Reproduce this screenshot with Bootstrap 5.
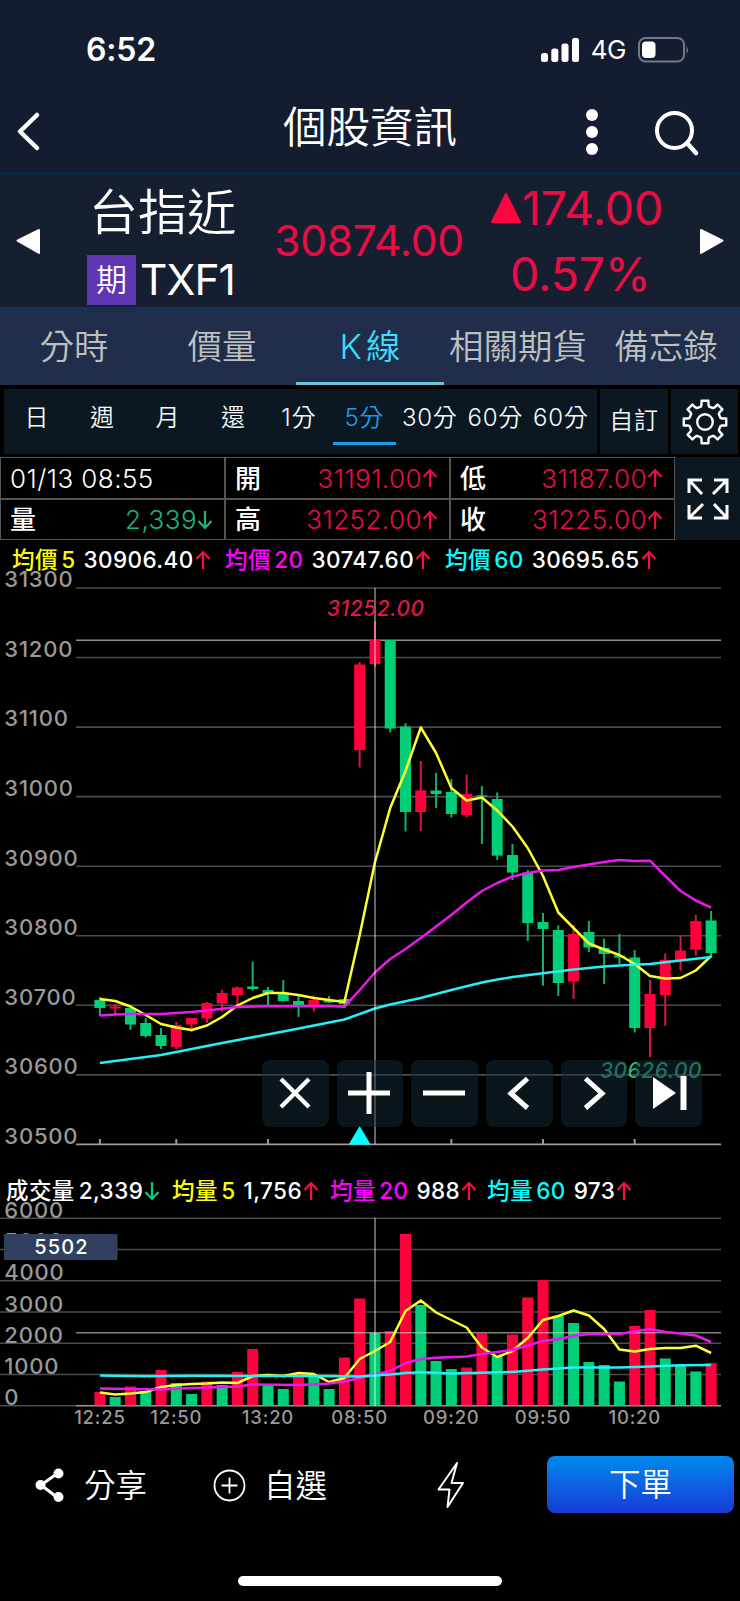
<!DOCTYPE html>
<html lang="zh-Hant">
<head>
<meta charset="utf-8">
<meta name="viewport" content="width=device-width, initial-scale=1">
<title>個股資訊</title>
<link href="https://cdn.jsdelivr.net/npm/bootstrap@5.3.0/dist/css/bootstrap.min.css" rel="stylesheet">
<style>
  body { width: 740px; height: 1601px; background: #000; color: #fff; overflow: hidden;
    font-family: Inter, "Noto Sans CJK TC", sans-serif; line-height: 1; }
  svg { display: block; }
  svg text { font-family: Inter, "Noto Sans CJK TC", sans-serif; }
  .up { color: #ff0a42; } .down { color: #00cf7b; }
  .num-up { color: #ea0d45; } .num-down { color: #17b97b; }

  .app-top { height: 175px; background: #141d30; border-bottom: 3px solid #0a2840; }
  .status-row { height: 98px; padding: 2px 50px 0 86px; }
  .status-row .clock { font-size: 32px; font-weight: 600; letter-spacing: -.2px; }
  .status-row .net { font-size: 26px; letter-spacing: -.5px; }
  .title-row { height: 74px; padding-bottom: 12px; display: grid; grid-template-columns: 1fr 200px 1fr; align-items: center; }
  .title-row h1 { font-size: 43.5px; font-weight: 350; line-height: 58px; margin: 0 0 4px; white-space: nowrap; text-align: center; }

  .quote { height: 132px; background: #161f30; }
  .quote-name { width: 160px; margin-left: 47px; }
  .quote-name .zh { font-size: 49px; font-weight: 350; line-height: 76px; height: 72px; white-space: nowrap; padding-left: 2px; }
  .kind { width: 49px; height: 50px; background: #5f36b3; font-size: 31px; font-weight: 350; line-height: 50px; text-align: center; }
  .code { font-size: 42.5px; font-weight: 400; letter-spacing: -1px; white-space: nowrap; }
  .last-price { width: 190px; margin-left: 27px; font-size: 42.5px; font-weight: 400; text-align: center; letter-spacing: -.3px; white-space: nowrap; }
  .chg { width: 180px; margin-left: 25px; font-size: 46.5px; font-weight: 400; line-height: 66px; letter-spacing: -.1px; }

  .main-tabs { height: 78px; background: linear-gradient(#1a3150, #202e4b 12px, #202e4b); }
  .main-tabs .nav-link { width: 148px; padding: 0; line-height: 79px; height: 78px; font-size: 34.5px; font-weight: 350; white-space: nowrap;
    color: #bec0c0; border-radius: 0; border-bottom: 3px solid transparent; text-align: center; }
  .main-tabs .nav-link.active { color: #3ddcf8; border-color: #6cc6da; }

  .period-bar { height: 72px; padding: 4px 2px 8px 4px; gap: 3px; }
  .pane { background: #0b1821; height: 65px; }
  .period-bar .nav-link { width: 65.5px; padding: 0; height: 65px; font-size: 24px; line-height: 58px; font-weight: 350; color: #f4f8fa; text-align: center; white-space: nowrap; letter-spacing: .7px; }
  .period-bar .nav-link.active { color: #1b9eef; }
  .period-bar .nav-link.active::after { content: ""; display: block; width: 63px; height: 3px; background: #1e9fe6; margin: -5px auto 0; }
  .period-bar .custom { width: 68px; line-height: 64px; }

  .ohlc { width: 675px; height: 83px; display: grid; grid-template-columns: repeat(3, 1fr); grid-template-rows: 1fr 1fr; gap: 2px; background: #555; border: 1px solid #555; }
  .ohlc > div { background: #000; display: flex; justify-content: space-between; align-items: center; padding: 2px 10px 0 9px; font-size: 26px; font-weight: 350; letter-spacing: .45px; }
  .ohlc b { font-weight: 500; font-size: 26px; }
  .ohlc .val { display: flex; align-items: center; }

  .legend-row { font-size: 22.5px; font-weight: 500; white-space: nowrap; letter-spacing: .4px; word-spacing: -3px; }
  .legend-row > span { display: flex; align-items: center; }
  .l5 { color: #ff0; } .l20 { color: #f0f; } .l60 { color: #0ff; }
  .legend-row svg { margin-left: 1px; }

  .tools { left: 262px; top: 484px; gap: 8px; }
  .tools button { width: 66.7px; height: 66.7px; padding: 0; border: 0; border-radius: 8px; background: rgba(22, 42, 56, .5); display: grid; place-items: center; }
  .bottom-row { height: 57px; font-size: 31.5px; font-weight: 350; }
  .bottom-row span { padding-top: 2px; }
  .order-btn { width: 187px; height: 57px; padding: 0; border: 0; border-radius: 8px; color: #fff; font-size: 31.5px; font-weight: 350; background: linear-gradient(#0089ee, #193cd6); }
  .home-bar { width: 264px; height: 10px; border-radius: 5px; background: #fff; }
</style>
</head>
<body>
<svg width="0" height="0" class="position-absolute">
  <defs>
    <g id="arrow-up" fill="none" stroke="currentColor" stroke-width="2.200"><path d="M8 19V2M1.500 9L8 2l6.500 7"/></g>
    <g id="arrow-down" fill="none" stroke="currentColor" stroke-width="2.200"><path d="M8 1v17M1.500 11l6.500 7 6.500-7"/></g>
  </defs>
</svg>

<header class="app-top">
  <div class="status-row d-flex align-items-center">
    <span class="clock">6:52</span>
    <svg class="ms-auto" width="38" height="24" fill="#fff"><rect y="15" width="7" height="9" rx="2.500"/><rect x="10.300" y="10.500" width="7" height="13.500" rx="2.500"/><rect x="20.500" y="5.500" width="7" height="18.500" rx="2.500"/><rect x="31" width="7" height="24" rx="2.500"/></svg>
    <span class="net ms-2 ps-1">4G</span>
    <svg class="ms-2 ps-1" width="56" height="26" viewBox="0 0 52 26"><rect x="1" y="1" width="45" height="23.500" rx="6.500" fill="none" stroke="#717887" stroke-width="2"/><rect x="4" y="4.500" width="13.500" height="16.500" rx="4" fill="#fff"/><path d="M48.500 9q3 4 0 8z" fill="#717887"/></svg>
  </div>
  <div class="title-row">
    <svg width="60" height="60" fill="none" stroke="#fff" stroke-width="4.500" stroke-linecap="round" stroke-linejoin="round"><path d="M37 16L20 32.500 37 49"/></svg>
    <h1>個股資訊</h1>
    <svg width="270" height="60" fill="#fff"><circle cx="122" cy="16" r="6"/><circle cx="122" cy="33" r="6"/><circle cx="122" cy="50" r="6"/><circle cx="204.500" cy="31.500" r="17.500" fill="none" stroke="#fff" stroke-width="4"/><path d="M217 44l9 10" stroke="#fff" stroke-width="4.500" stroke-linecap="round"/></svg>
  </div>
</header>

<section class="quote d-flex align-items-center">
  <svg class="flex-shrink-0" width="40" height="30"><path d="M17.500 14.700L39 4v23z" fill="#fff" stroke="#fff" stroke-width="2" stroke-linejoin="round"/></svg>
  <div class="quote-name align-self-start flex-shrink-0">
    <div class="zh">台指近</div>
    <div class="d-flex align-items-center mt-2"><span class="kind">期</span><span class="code ms-1">TXF1</span></div>
  </div>
  <div class="last-price num-up">30874.00</div>
  <div class="chg num-up">
    <div class="d-flex align-items-center"><svg class="flex-shrink-0" width="33" height="34"><path d="M17 3L31 31H3z" fill="#ff0640" stroke="#ff0640" stroke-width="2" stroke-linejoin="round"/></svg><span>174.00</span></div>
    <div style="padding-left:21px">0.57%</div>
  </div>
  <svg class="ms-auto flex-shrink-0" width="40" height="30"><path d="M22.500 14.700L1 4v23z" fill="#fff" stroke="#fff" stroke-width="2" stroke-linejoin="round"/></svg>
</section>

<nav class="nav main-tabs flex-nowrap">
  <a class="nav-link">分時</a><a class="nav-link">價量</a><a class="nav-link active"><span class="me-1">K</span>線</a><a class="nav-link">相關期貨</a><a class="nav-link">備忘錄</a>
</nav>

<div class="period-bar d-flex">
  <nav class="nav pane flex-nowrap" style="width:593px">
    <a class="nav-link">日</a><a class="nav-link">週</a><a class="nav-link">月</a><a class="nav-link">還</a><a class="nav-link">1分</a><a class="nav-link active">5分</a><a class="nav-link">30分</a><a class="nav-link">60分</a><a class="nav-link">60分</a>
  </nav>
  <div class="pane"><a class="nav-link custom">自訂</a></div>
  <div class="pane d-grid" style="width:67px;place-items:center">
    <svg id="gear" width="46" height="46" viewBox="-23 -23 46 46" fill="none" stroke="#fff" stroke-width="2.400" stroke-linejoin="round"><circle r="7.800"/><path/></svg>
  </div>
</div>

<div class="d-flex">
  <div class="ohlc">
    <div><span>01/13 08:55</span></div>
    <div><b>開</b><span class="val num-up">31191.00<svg width="17" height="21"><use href="#arrow-up"/></svg></span></div>
    <div><b>低</b><span class="val num-up">31187.00<svg width="17" height="21"><use href="#arrow-up"/></svg></span></div>
    <div><b>量</b><span class="val num-down">2,339<svg width="17" height="21"><use href="#arrow-down"/></svg></span></div>
    <div><b>高</b><span class="val num-up">31252.00<svg width="17" height="21"><use href="#arrow-up"/></svg></span></div>
    <div><b>收</b><span class="val num-up">31225.00<svg width="17" height="21"><use href="#arrow-up"/></svg></span></div>
  </div>
  <div class="pane flex-grow-1 d-grid" style="height:83px;place-items:center">
    <svg width="42" height="42" fill="none" stroke="#fff" stroke-width="3"><path d="M2 15V2h13M2 2l13 14M27 2h13v13M40 2L26 16M2 27v13h13M2 40l14-14M27 40h13V27M40 40L27 26"/></svg>
  </div>
</div>

<div class="legend-row d-flex align-items-center" style="height:36px;padding:4px 0 0 12px">
  <span style="width:213px"><span class="l5 me-2">均價 5</span>30906.40<svg class="up" width="16" height="20"><use href="#arrow-up"/></svg></span>
  <span style="width:220px"><span class="l20 me-2">均價 20</span>30747.60<svg class="up" width="16" height="20"><use href="#arrow-up"/></svg></span>
  <span><span class="l60 me-2">均價 60</span>30695.65<svg class="up" width="16" height="20"><use href="#arrow-up"/></svg></span>
</div>

<div class="position-relative">
  <svg id="price" width="740" height="596" viewBox="0 576 740 596" overflow="visible"></svg>
  <div class="tools position-absolute d-flex">
    <button><svg width="34" height="34" stroke="#fff" stroke-width="4.200"><path d="M3 3l28 28M31 3L3 31"/></svg></button>
    <button><svg width="46" height="44" stroke="#fff" stroke-width="5"><path d="M22 1v42M1 22h42"/></svg></button>
    <button><svg width="45" height="44" stroke="#fff" stroke-width="5"><path d="M1 22h42"/></svg></button>
    <button><svg width="34" height="34" fill="none" stroke="#fff" stroke-width="5"><path d="M25.500 2.500L9 17.500l16.500 14.500"/></svg></button>
    <button><svg width="34" height="34" fill="none" stroke="#fff" stroke-width="5"><path d="M8.500 2.500L25 17.500 8.500 32"/></svg></button>
    <button><svg width="36" height="36" fill="#fff"><path d="M2 2l23 16L2 34zM29.500 1h6v34h-6z"/></svg></button>
  </div>
</div>

<div class="legend-row d-flex align-items-center" style="height:36px;padding:2px 0 0 6px">
  <span style="width:166px"><span class="me-1">成交量</span>2,339<svg class="down" width="16" height="20"><use href="#arrow-down"/></svg></span>
  <span style="width:158px"><span class="l5 me-2">均量 5</span>1,756<svg class="up" width="16" height="20"><use href="#arrow-up"/></svg></span>
  <span style="width:157px"><span class="l20 me-2">均量 20</span>988<svg class="up" width="16" height="20"><use href="#arrow-up"/></svg></span>
  <span><span class="l60 me-2">均量 60</span>973<svg class="up" width="16" height="20"><use href="#arrow-up"/></svg></span>
</div>
<svg id="volume" width="740" height="248" viewBox="0 1208 740 248" overflow="visible"></svg>

<footer>
  <div class="bottom-row d-flex align-items-center" style="padding:0 6px 0 34px">
    <svg width="31" height="36" fill="#fff" stroke="#fff" stroke-width="3"><path d="M24 6L7 18l17 13" fill="none"/><circle cx="24.500" cy="6.500" r="3.500"/><circle cx="6.500" cy="18" r="3.500"/><circle cx="24.500" cy="30" r="3.500"/></svg>
    <span style="margin-left:19px">分享</span>
    <svg style="margin-left:65px" width="34" height="34" fill="none" stroke="#fff" stroke-width="1.800"><circle cx="17.500" cy="17.500" r="15"/><path d="M17.500 9.500v16M9.500 17.500h16"/></svg>
    <span style="margin-left:18px">自選</span>
    <svg style="margin-left:109px" width="30" height="50" fill="none" stroke="#fff" stroke-width="2" stroke-linejoin="round"><path d="M21 3L2.500 29.500h11L11.500 47 27 23H15.500z"/></svg>
    <button class="order-btn ms-auto">下單</button>
  </div>
  <div class="home-bar mx-auto" style="margin-top:63px"></div>
</footer>

<script>
const RED = '#ff003c', GREEN = '#00cf78';
const X = i => 99.9 + i * 15.28;
const line = (x1, y1, x2, y2, c, w = 1.5) => `<path d="M${x1} ${y1}L${x2} ${y2}" stroke="${c}" stroke-width="${w}"/>`;
const label = (x, y, s, t, extra = '') => `<text x="${x}" y="${y}" font-size="${s}" font-weight="500" fill="#999" letter-spacing=".8" ${extra}>${t}</text>`;
const poly = (pts, c) => `<polyline fill="none" stroke="${c}" stroke-width="2.500" stroke-linejoin="round" points="${pts.map(([i, y]) => X(i).toFixed(1) + ',' + y).join(' ')}"/>`;
const seq = a => a.map((y, i) => [i, y]);

// direction, body top, body bottom, wick top, wick bottom
const candles = [
  ['g',1000,1008,997,1016],['r',1006.5,1008.5,1004,1014],['g',1008,1024.5,1005,1030],['g',1023,1036,1018,1037.5],['g',1035,1046,1028,1049],
  ['r',1025,1047,1022,1049.500],['r',1018,1024.5,1018,1032],['r',1003,1018.5,1002,1023],['r',993,1003.5,990,1012],['r',987.5,995,986.5,1008],
  ['g',986.5,989,961.5,990.5],['g',990,993,987,1005],['g',993,1001,980,1001.5],['g',1001,1005,995,1017],['r',1000,1006,995.5,1011.5],
  ['g',1000.5,1002.5,996,1003],['g',999,1004,999,1008],['r',664.500,750,662,767.5],['r',640,664,621,666.5],['g',640,728.5,640,732.500],
  ['g',726.5,812,723,831.500],['r',790.3,812,761,831],['g',790.5,794,773,808],['g',792,814,779,817.5],['r',794,815,774.500,817.5],
  ['g',795.3,796.5,786,844],['g',799,855.7,792.5,860],['g',855,872.5,844,880],['g',872.5,923,870,941],['g',922,929,913,985.7],
  ['g',930,983,925.5,996],['r',934,981.5,925,999],['g',932,947.5,921,952],['g',948,954,938.5,984],['g',955.500,957.5,934,964],
  ['g',957.5,1028,950,1032.500],['r',994,1028,980,1057],['r',960,995,953.5,1026],['r',950.5,960,936,970.5],['r',921,949.7,915,955.7],['g',920.5,953,911,957]
];
let s = '';
for (let k = 0; k <= 8; k++) {
  const y = 588 + k * 69.55;
  s += line(76, y, 721, y, k === 8 ? '#999' : '#4c4c4c', 1.6) + label(4.3, y - .7, 22, 31300 - k * 100);
}
[0, 5, 11, 23, 29, 35].forEach(i => s += line(X(i), 1139, X(i), 1144, '#999', 2));
s += line(76, 640.3, 721, 640.3, '#8e8e8e', 1.5);
candles.forEach(([c, a, b, t, l], i) => {
  const f = c === 'g' ? GREEN : RED;
  s += line(X(i), t, X(i), l, c === 'g' ? '#10b26c' : '#d81844', 2) + `<rect x="${X(i) - 5.5}" y="${a}" width="11" height="${b - a}" fill="${f}"/>`;
});
s += poly(seq([999,1001,1006.5,1015,1024,1027.500,1030,1025.5,1017,1005.5,998,993,993,995,998,1000,1002,935,862.500,808,771,727.500,753,788,800.500,797.5,810.5,826.5,848,876,912.5,928,943.5,949.5,955,964,976,978.5,978,970.5,956]), '#ffff30');
s += poly([[0,1015.5],[1,1014.5],[2,1014],[4,1014],[6,1012],[7,1010.5],[9,1007],[11,1006.3],[15,1006],[16,1006.7],[17,990],[18,972.500],[19,959],[20,949],[21,938],[22,926.5],[23,915],[24,902.500],[25,891],[26,883],[27,876.5],[28,873],[29,870.5],[30,870],[31,867],[32,864.500],[33,862],[34,860],[35,861],[36,860.700],[37,876],[38,891],[39,900.5],[40,907.7]], '#ec18ec');
s += poly([[0,1063],[4,1055],[8,1043],[12,1031.5],[16,1019.500],[18,1008.5],[19,1004.500],[21,998],[23,990],[25,982.500],[26,979.5],[27,977],[29,973.3],[31,969.5],[33,966.5],[34,965.500],[36,964],[38,960.5],[40,957]], '#25f0f5');
s += line(375, 588, 375, 1144, 'rgba(255,255,255,.5)', 1.6);
s += `<path d="M${X(17)} 1126l11 18.500h-22z" fill="#0ff"/>`;
s += `<text x="375.700" y="615.500" font-size="20.800" font-weight="500" font-style="italic" letter-spacing=".6" text-anchor="middle" fill="#e0154a">31252.00</text>`;
s += `<text x="651" y="1077.500" font-size="20.800" font-weight="500" font-style="italic" letter-spacing=".6" text-anchor="middle" fill="#22bd86">30626.00</text>`;
document.getElementById('price').innerHTML = s;

const vols = [['r',1392],['g',1397],['r',1386.5],['g',1391],['r',1370],['g',1383],['g',1394],['r',1381.5],['g',1385],['r',1372],['r',1349],['g',1385],['g',1389],['r',1374],['g',1376],['g',1389],['r',1357.5],['r',1298.5],['g',1333],['r',1331],['r',1234],['g',1305],['g',1361],['g',1369],['r',1367.5],['r',1333.5],['g',1356],['r',1334.5],['r',1297.5],['r',1280],['g',1316],['g',1323],['g',1362],['g',1365],['g',1381.5],['r',1326],['r',1310],['g',1358.5],['g',1366],['g',1371.5],['r',1363]];
s = '';
for (let k = 0; k <= 6; k++) {
  const y = 1218.3 + k * 31.25;
  s += line(k === 6 ? 76 : 0, y, 721, y, k === 6 ? '#999' : '#4c4c4c', 1.6) + label(4.3, y - .5, 22, 6000 - k * 1000);
}
s += line(0, 1405.8, 76, 1405.8, '#4c4c4c', 1.6);
vols.forEach(([c, y], i) => s += `<rect x="${X(i) - 5.5}" y="${y}" width="11" height="${1405.3 - y}" fill="${c === 'g' ? GREEN : RED}"/>`);
s += line(76, 1332.8, 721, 1332.8, 'rgba(200,200,200,.65)', 1.5);
s += poly(seq([1392.5,1394.5,1393.5,1392,1387,1385,1384,1383.5,1382.500,1383,1376,1375,1376,1373,1374,1382,1378,1359,1351,1342,1311,1300.5,1312.5,1320,1327.5,1347.5,1357,1351,1338,1320,1316,1310.5,1315.5,1329,1349.5,1351.5,1349,1348,1348,1345.7,1353]), '#ffff30');
s += poly([[0,1388.5],[4,1389.5],[6,1388],[8,1387],[9,1386.5],[10,1384.5],[13,1385],[15,1383.5],[16,1381.5],[17,1378],[18,1374.500],[19,1371],[20,1363],[21,1359],[22,1357.7],[24,1356.5],[25,1354],[26,1352],[27,1350],[28,1345.5],[29,1341],[30,1339],[31,1336],[32,1334],[34,1334],[35,1331.5],[36,1329],[37,1332],[38,1333.5],[39,1335.5],[40,1342]], '#ec18ec');
s += poly([[0,1375.5],[3,1376.3],[6,1375.7],[10,1376],[14,1376],[17,1376.5],[19,1374.5],[20,1373],[21,1372.300],[23,1373.5],[27,1372],[29,1369.500],[31,1367.5],[34,1367.5],[36,1366.5],[38,1365.2],[40,1365]], '#25f0f5');
s += line(375, 1218, 375, 1406, 'rgba(255,255,255,.5)', 1.6);
s += `<rect x="4" y="1234" width="113.500" height="26" fill="#30405e"/><text x="61.500" y="1253.800" font-size="20" font-weight="500" letter-spacing="1.100" text-anchor="middle" fill="#fff">5502</text>`;
[[0,'12:25'],[5,'12:50'],[11,'13:20'],[17,'08:50'],[23,'09:20'],[29,'09:50'],[35,'10:20']].forEach(([i, t]) => s += label(X(i), 1424, 18.5, t, 'text-anchor="middle"'));
document.getElementById('volume').innerHTML = s;

// eight-tooth gear outline
let g = '';
for (let k = 0; k < 8; k++) {
  [[-.26, 16], [-.2, 17.5], [-.16, 21.5], [.16, 21.5], [.2, 17.5], [.26, 16]].forEach(([a0, r]) => {
    const a = k * Math.PI / 4 + a0;
    g += (g ? 'L' : 'M') + (r * Math.sin(a)).toFixed(2) + ' ' + (-r * Math.cos(a)).toFixed(2);
  });
}
document.querySelector('#gear path').setAttribute('d', g + 'z');
</script>
<script src="https://cdn.jsdelivr.net/npm/bootstrap@5.3.0/dist/js/bootstrap.bundle.min.js"></script>
</body>
</html>
